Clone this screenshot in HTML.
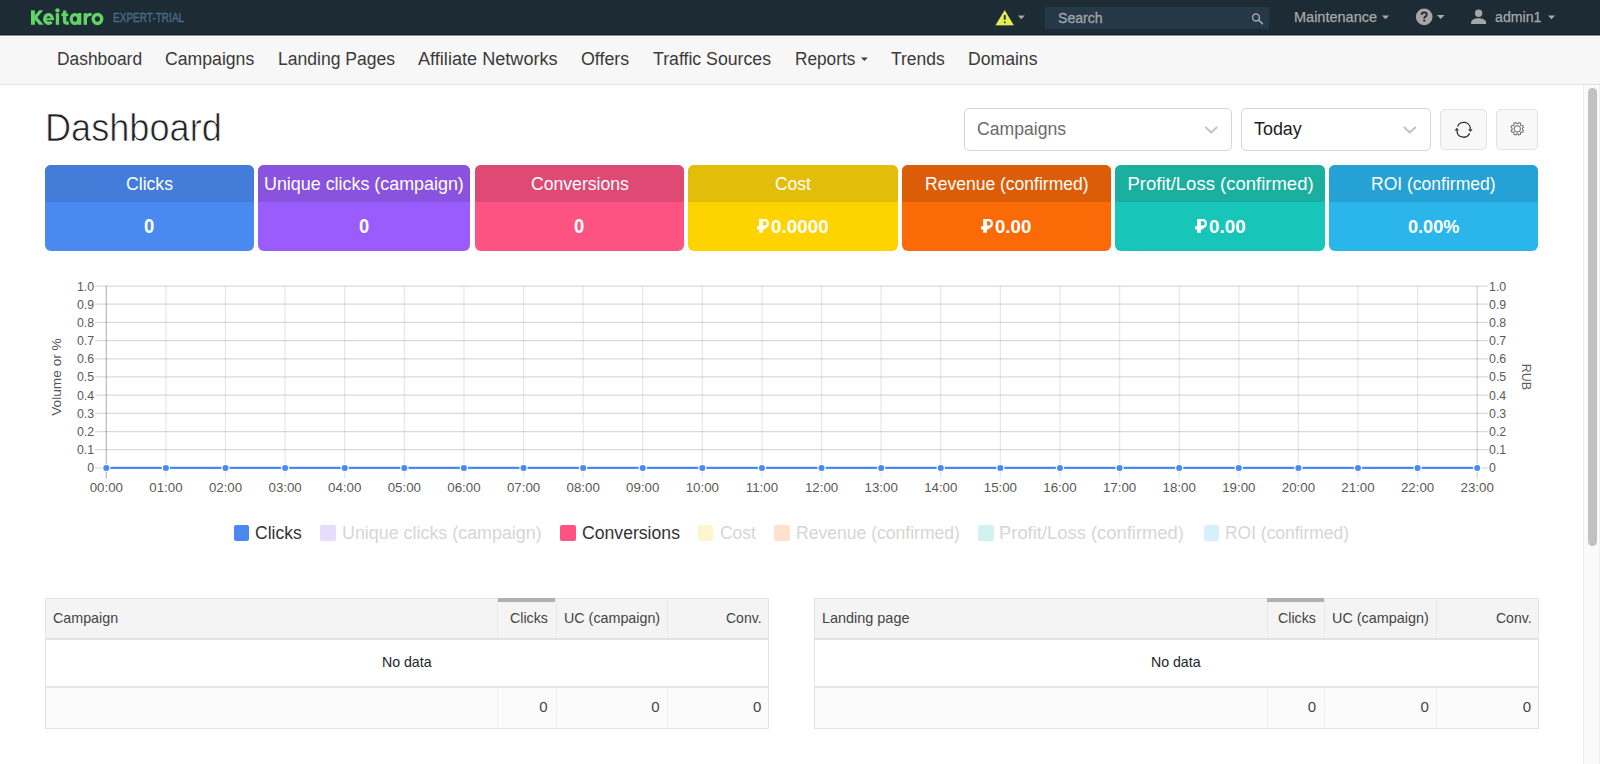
<!DOCTYPE html>
<html><head><meta charset="utf-8"><style>
html,body{margin:0;padding:0;width:1600px;height:764px;overflow:hidden;background:#fff;}
body{position:relative;font-family:"Liberation Sans",sans-serif;}
.t{position:absolute;white-space:nowrap;transform-origin:0 0;}
.r{position:absolute;}
</style></head><body>
<div class="r" style="left:0.00px;top:0.00px;width:1600.00px;height:35.00px;background:#1d2b35;"></div>
<div class="r" style="left:0.00px;top:34.00px;width:1600.00px;height:1.00px;background:#0d1b26;"></div>
<div class="r" style="left:0.00px;top:35.00px;width:1600.00px;height:1.00px;background:#8a9197;"></div>
<div class="r" style="left:0.00px;top:36.00px;width:1600.00px;height:1.00px;background:#ffffff;"></div>
<div class="r" style="left:0.00px;top:37.00px;width:1600.00px;height:1.00px;background:#f1f1f1;"></div>
<svg class="r" style="left:28px;top:6px" width="80" height="22" viewBox="28 6 80 22"><g fill="#62d466"><rect x="31.0" y="10.3" width="3.9" height="14.5"/><path d="M34.6 15.6 L39.2 10.3 L43.3 10.3 L34.6 20.6 Z"/><path d="M36.6 16.4 L43.7 24.8 L39.1 24.8 L34.4 19.3 Z"/><rect x="55.8" y="13.2" width="3.3" height="11.6"/><circle cx="57.45" cy="10.35" r="2.2"/><rect x="61.4" y="13.4" width="6.8" height="2.7"/><rect x="78.0" y="13.0" width="3.3" height="11.8"/><rect x="83.6" y="13.2" width="3.4" height="11.6"/></g><g fill="none" stroke="#62d466"><path d="M52.4 18.95 A3.85 4.3 0 1 0 51.5 21.7" stroke-width="3.3"/><path d="M45.0 19.2 H54.0" stroke-width="2.0"/><path d="M64.6 10.6 V21.0 Q64.6 23.1 67.0 23.1 H68.8" stroke-width="3.4"/><ellipse cx="74.95" cy="18.95" rx="3.75" ry="4.4" stroke-width="3.3"/><path d="M85.2 20.5 Q85.4 14.2 91.6 14.2" stroke-width="2.9"/><ellipse cx="97.45" cy="18.95" rx="4.25" ry="4.45" stroke-width="3.5"/></g></svg>
<div class="t" style="left:112.50px;top:10.80px;font-size:12.00px;line-height:14px;color:#4a6c87;transform:scaleX(0.8358);-webkit-text-stroke:0.35px #4a6c87;">EXPERT-TRIAL</div>
<svg class="r" style="left:990px;top:4px" width="40" height="28" viewBox="990 4 40 28"><path d="M1004.7 10.6 L1013.4 25.1 L995.9 25.1 Z" fill="#e4ef55" stroke="#e4ef55" stroke-width="0.6" stroke-linejoin="round"/><rect x="1003.8" y="15.1" width="1.9" height="4.6" fill="#1e2a35"/><rect x="1003.8" y="21.5" width="1.9" height="1.7" rx="0.8" fill="#1e2a35"/><path d="M1017.9 15.4 L1024.8 15.4 L1021.35 19.2 Z" fill="#a9a9a9"/></svg>
<div class="r" style="left:1045.00px;top:7.00px;width:224.00px;height:22.00px;background:#243848;"></div>
<div class="t" style="left:1058.40px;top:8.90px;font-size:15.00px;line-height:17px;color:#a3a5a7;transform:scaleX(0.9389);-webkit-text-stroke:0.3px #a3a5a7;">Search</div>
<svg class="r" style="left:1240px;top:6px" width="32" height="24" viewBox="1240 6 32 24"><circle cx="1256" cy="17.5" r="3.4" fill="none" stroke="#a2a2a2" stroke-width="1.5"/><path d="M1258.6 20.1 L1262.4 23.7" stroke="#a2a2a2" stroke-width="1.6" stroke-linecap="round"/></svg>
<div class="t" style="left:1293.50px;top:8.00px;font-size:15.00px;line-height:17px;color:#a9a9a9;transform:scaleX(0.9663);-webkit-text-stroke:0.25px #a9a9a9;">Maintenance</div>
<svg class="r" style="left:1378px;top:4px" width="180" height="26" viewBox="1378 4 180 26"><path d="M1382 15.4 L1389 15.4 L1385.5 19.2 Z" fill="#a9a9a9"/><circle cx="1424.2" cy="16.9" r="8.3" fill="#a6a6a6"/><path d="M1421.7 14.7 Q1421.7 12.4 1424.2 12.4 Q1426.7 12.4 1426.7 14.6 Q1426.7 15.9 1425.3 16.6 Q1424.2 17.2 1424.2 18.6" fill="none" stroke="#1e2a35" stroke-width="1.9"/><circle cx="1424.2" cy="20.6" r="1.15" fill="#1e2a35"/><path d="M1437 15.0 L1444.4 15.0 L1440.7 19.0 Z" fill="#a9a9a9"/><circle cx="1478.6" cy="13.2" r="3.7" fill="#a6a6a6"/><path d="M1471.1 23.9 L1471.1 22.6 C1471.1 19.8 1475 18.3 1478.6 18.3 C1482.2 18.3 1486.1 19.8 1486.1 22.6 L1486.1 23.9 Z" fill="#a6a6a6"/><path d="M1548 15.4 L1555 15.4 L1551.5 19.2 Z" fill="#a9a9a9"/></svg>
<div class="t" style="left:1495.20px;top:8.00px;font-size:15.00px;line-height:17px;color:#a9a9a9;transform:scaleX(0.9442);-webkit-text-stroke:0.25px #a9a9a9;">admin1</div>
<div class="r" style="left:0.00px;top:38.00px;width:1600.00px;height:46.00px;background:#f7f7f7;"></div>
<div class="r" style="left:0.00px;top:84.00px;width:1600.00px;height:1.00px;background:#e3e3e3;"></div>
<div class="t" style="left:56.50px;top:49.20px;font-size:18.00px;line-height:20px;color:#3a3a3a;transform:scaleX(0.9659);">Dashboard</div>
<div class="t" style="left:165.30px;top:49.20px;font-size:18.00px;line-height:20px;color:#3a3a3a;transform:scaleX(0.9802);">Campaigns</div>
<div class="t" style="left:277.60px;top:49.20px;font-size:18.00px;line-height:20px;color:#3a3a3a;transform:scaleX(0.9742);">Landing Pages</div>
<div class="t" style="left:418.00px;top:49.20px;font-size:18.00px;line-height:20px;color:#3a3a3a;transform:scaleX(1.0068);">Affiliate Networks</div>
<div class="t" style="left:581.30px;top:49.20px;font-size:18.00px;line-height:20px;color:#3a3a3a;transform:scaleX(0.9887);">Offers</div>
<div class="t" style="left:652.80px;top:49.20px;font-size:18.00px;line-height:20px;color:#3a3a3a;transform:scaleX(0.9833);">Traffic Sources</div>
<div class="t" style="left:794.60px;top:49.20px;font-size:18.00px;line-height:20px;color:#3a3a3a;transform:scaleX(0.9571);">Reports</div>
<div class="t" style="left:890.80px;top:49.20px;font-size:18.00px;line-height:20px;color:#3a3a3a;transform:scaleX(0.9701);">Trends</div>
<div class="t" style="left:968.00px;top:49.20px;font-size:18.00px;line-height:20px;color:#3a3a3a;transform:scaleX(0.9775);">Domains</div>
<svg class="r" style="left:858px;top:55px" width="12" height="8" viewBox="858 55 12 8"><path d="M861 57.4 L867.8 57.4 L864.4 61 Z" fill="#3a3a3a"/></svg>
<div class="r" style="left:1583.00px;top:85.00px;width:17.00px;height:679.00px;background:#fafafa;border-left:1px solid #ececec;border-right:1px solid #f1f1f1;box-sizing:border-box;"></div>
<div class="r" style="left:1588.00px;top:88.00px;width:9.00px;height:458.00px;background:#c1c1c1;border-radius:4.5px;"></div>
<div class="t" style="left:44.50px;top:106.25px;font-size:38.50px;line-height:43px;color:#1f2326;transform:scaleX(0.9386);-webkit-text-stroke:0.7px #fff;">Dashboard</div>
<div class="r" style="left:964.00px;top:108.00px;width:268.00px;height:43.00px;border:1px solid #cfd6dd;border-radius:5px;background:#fff;box-sizing:border-box;"></div>
<div class="t" style="left:977.00px;top:118.80px;font-size:17.50px;line-height:20px;color:#6b6b6b;transform:scaleX(1.0056);">Campaigns</div>
<div class="r" style="left:1241.00px;top:108.00px;width:190.00px;height:43.00px;border:1px solid #cfd6dd;border-radius:5px;background:#fff;box-sizing:border-box;"></div>
<div class="t" style="left:1253.80px;top:119.30px;font-size:18.00px;line-height:20px;color:#212121;transform:scaleX(0.9938);">Today</div>
<svg class="r" style="left:1195px;top:118px" width="230" height="24" viewBox="1195 118 230 24"><path d="M1205.9 127.4 L1211.2 132.4 L1216.6 127.4" fill="none" stroke="#c2c2c2" stroke-width="2" stroke-linecap="round" stroke-linejoin="round"/><path d="M1404.5 127.4 L1409.8 132.4 L1415.2 127.4" fill="none" stroke="#c2c2c2" stroke-width="2" stroke-linecap="round" stroke-linejoin="round"/></svg>
<div class="r" style="left:1440.00px;top:109.00px;width:47.00px;height:41.00px;border:1px solid #e2e2e2;border-radius:5px;background:#f8f8f8;box-sizing:border-box;"></div>
<div class="r" style="left:1496.00px;top:109.00px;width:42.00px;height:41.00px;border:1px solid #e2e2e2;border-radius:5px;background:#f8f8f8;box-sizing:border-box;"></div>
<svg class="r" style="left:1450px;top:117px" width="28" height="26" viewBox="1450 117 28 26"><path d="M1457.6 126.4 A6.6 6.6 0 0 1 1470.3 129.2" fill="none" stroke="#2f2f2f" stroke-width="1.3"/><path d="M1469.6 133.3 A6.6 6.6 0 0 1 1457 130.4" fill="none" stroke="#2f2f2f" stroke-width="1.3"/><path d="M1468.2 129.2 L1472.6 129.2 L1470.4 131.9 Z" fill="#2f2f2f"/><path d="M1454.6 130.5 L1459 130.5 L1456.8 127.8 Z" fill="#2f2f2f"/></svg>
<svg class="r" style="left:1504px;top:117px" width="28" height="26" viewBox="1504 117 28 26"><path d="M1517.79 123.72 L1518.79 122.58 L1520.64 123.34 L1520.54 124.86 L1521.24 125.56 L1522.76 125.46 L1523.52 127.31 L1522.38 128.31 L1522.38 129.29 L1523.52 130.29 L1522.76 132.14 L1521.24 132.04 L1520.54 132.74 L1520.64 134.26 L1518.79 135.02 L1517.79 133.88 L1516.81 133.88 L1515.81 135.02 L1513.96 134.26 L1514.06 132.74 L1513.36 132.04 L1511.84 132.14 L1511.08 130.29 L1512.22 129.29 L1512.22 128.31 L1511.08 127.31 L1511.84 125.46 L1513.36 125.56 L1514.06 124.86 L1513.96 123.34 L1515.81 122.58 L1516.81 123.72 Z" fill="none" stroke="#777" stroke-width="1.1" stroke-linejoin="round"/><circle cx="1517.3" cy="128.8" r="3.1" fill="none" stroke="#777" stroke-width="1.1"/></svg>
<div class="r" style="left:45.00px;top:165px;width:209.00px;height:86px;border-radius:6px;overflow:hidden;background:#4a8af0"><div style="height:36.5px;background:#447cda"></div></div>
<div class="t" style="left:125.60px;top:172.60px;font-size:18.50px;line-height:21px;color:#fff;transform:scaleX(0.9523);">Clicks</div>
<div class="t" style="left:143.80px;top:215.10px;font-size:19.80px;line-height:22px;color:#fff;font-weight:bold;transform:scaleX(0.9273);">0</div>
<div class="r" style="left:258.00px;top:165px;width:212.00px;height:86px;border-radius:6px;overflow:hidden;background:#9b5cfd"><div style="height:36.5px;background:#8953e0"></div></div>
<div class="t" style="left:264.20px;top:172.60px;font-size:18.50px;line-height:21px;color:#fff;transform:scaleX(0.9669);">Unique clicks (campaign)</div>
<div class="t" style="left:359.05px;top:215.10px;font-size:19.80px;line-height:22px;color:#fff;font-weight:bold;transform:scaleX(0.9273);">0</div>
<div class="r" style="left:475.00px;top:165px;width:209.00px;height:86px;border-radius:6px;overflow:hidden;background:#fd5382"><div style="height:36.5px;background:#de4a73"></div></div>
<div class="t" style="left:530.60px;top:172.60px;font-size:18.50px;line-height:21px;color:#fff;transform:scaleX(0.9518);">Conversions</div>
<div class="t" style="left:574.10px;top:215.10px;font-size:19.80px;line-height:22px;color:#fff;font-weight:bold;transform:scaleX(0.9273);">0</div>
<div class="r" style="left:688.00px;top:165px;width:210.00px;height:86px;border-radius:6px;overflow:hidden;background:#fdd300"><div style="height:36.5px;background:#e2bd0a"></div></div>
<div class="t" style="left:775.00px;top:172.60px;font-size:18.50px;line-height:21px;color:#fff;transform:scaleX(0.9438);">Cost</div>
<div class="t" style="left:771.00px;top:216.10px;font-size:19.00px;line-height:21px;color:#fff;font-weight:bold;transform:scaleX(0.9914);">0.0000</div>
<svg class="r" style="left:757.00px;top:216px" width="16" height="20" viewBox="0 0 16 20"><path fill="#fff" fill-rule="evenodd" d="M2.15 3 H7.8 C10.5 3 12.05 4.8 12.05 7.5 C12.05 10.2 10.5 12 7.8 12 H5.95 V16.8 H2.15 Z M5.95 5.25 H7.7 C9.1 5.25 9.7 6.2 9.7 7.45 C9.7 8.7 9.1 9.6 7.7 9.6 H5.95 Z"/><rect x="0" y="10.3" width="8.3" height="3.1" fill="#fff"/></svg>
<div class="r" style="left:902.00px;top:165px;width:209.00px;height:86px;border-radius:6px;overflow:hidden;background:#fa6a06"><div style="height:36.5px;background:#dc5d07"></div></div>
<div class="t" style="left:924.90px;top:172.60px;font-size:18.50px;line-height:21px;color:#fff;transform:scaleX(0.9470);">Revenue (confirmed)</div>
<div class="t" style="left:995.20px;top:216.10px;font-size:19.00px;line-height:21px;color:#fff;font-weight:bold;transform:scaleX(0.9811);">0.00</div>
<svg class="r" style="left:981.20px;top:216px" width="16" height="20" viewBox="0 0 16 20"><path fill="#fff" fill-rule="evenodd" d="M2.15 3 H7.8 C10.5 3 12.05 4.8 12.05 7.5 C12.05 10.2 10.5 12 7.8 12 H5.95 V16.8 H2.15 Z M5.95 5.25 H7.7 C9.1 5.25 9.7 6.2 9.7 7.45 C9.7 8.7 9.1 9.6 7.7 9.6 H5.95 Z"/><rect x="0" y="10.3" width="8.3" height="3.1" fill="#fff"/></svg>
<div class="r" style="left:1115.00px;top:165px;width:210.00px;height:86px;border-radius:6px;overflow:hidden;background:#17c5b9"><div style="height:36.5px;background:#1baf9f"></div></div>
<div class="t" style="left:1127.50px;top:172.60px;font-size:18.50px;line-height:21px;color:#fff;">Profit/Loss (confirmed)</div>
<div class="t" style="left:1209.00px;top:216.10px;font-size:19.00px;line-height:21px;color:#fff;font-weight:bold;transform:scaleX(0.9892);">0.00</div>
<svg class="r" style="left:1195.00px;top:216px" width="16" height="20" viewBox="0 0 16 20"><path fill="#fff" fill-rule="evenodd" d="M2.15 3 H7.8 C10.5 3 12.05 4.8 12.05 7.5 C12.05 10.2 10.5 12 7.8 12 H5.95 V16.8 H2.15 Z M5.95 5.25 H7.7 C9.1 5.25 9.7 6.2 9.7 7.45 C9.7 8.7 9.1 9.6 7.7 9.6 H5.95 Z"/><rect x="0" y="10.3" width="8.3" height="3.1" fill="#fff"/></svg>
<div class="r" style="left:1329.00px;top:165px;width:209.00px;height:86px;border-radius:6px;overflow:hidden;background:#2ab6eb"><div style="height:36.5px;background:#26a1d6"></div></div>
<div class="t" style="left:1371.20px;top:172.60px;font-size:18.50px;line-height:21px;color:#fff;transform:scaleX(0.9468);">ROI (confirmed)</div>
<div class="t" style="left:1408.00px;top:216.10px;font-size:19.00px;line-height:21px;color:#fff;font-weight:bold;transform:scaleX(0.9544);">0.00%</div>
<svg class="r" style="left:0;top:0" width="1600" height="764"><path d="M95 286.00 H1488" stroke="rgba(0,0,0,0.15)" stroke-width="1.25"/><path d="M95 304.19 H1488" stroke="rgba(0,0,0,0.15)" stroke-width="1.25"/><path d="M95 322.38 H1488" stroke="rgba(0,0,0,0.15)" stroke-width="1.25"/><path d="M95 340.57 H1488" stroke="rgba(0,0,0,0.15)" stroke-width="1.25"/><path d="M95 358.76 H1488" stroke="rgba(0,0,0,0.15)" stroke-width="1.25"/><path d="M95 376.95 H1488" stroke="rgba(0,0,0,0.15)" stroke-width="1.25"/><path d="M95 395.14 H1488" stroke="rgba(0,0,0,0.15)" stroke-width="1.25"/><path d="M95 413.33 H1488" stroke="rgba(0,0,0,0.15)" stroke-width="1.25"/><path d="M95 431.52 H1488" stroke="rgba(0,0,0,0.15)" stroke-width="1.25"/><path d="M95 449.71 H1488" stroke="rgba(0,0,0,0.15)" stroke-width="1.25"/><path d="M95 467.90 H1488" stroke="rgba(0,0,0,0.15)" stroke-width="1.25"/><path d="M106.30 286 V478.5" stroke="rgba(0,0,0,0.09)" stroke-width="1.3"/><path d="M165.90 286 V478.5" stroke="rgba(0,0,0,0.09)" stroke-width="1.3"/><path d="M225.51 286 V478.5" stroke="rgba(0,0,0,0.09)" stroke-width="1.3"/><path d="M285.11 286 V478.5" stroke="rgba(0,0,0,0.09)" stroke-width="1.3"/><path d="M344.72 286 V478.5" stroke="rgba(0,0,0,0.09)" stroke-width="1.3"/><path d="M404.32 286 V478.5" stroke="rgba(0,0,0,0.09)" stroke-width="1.3"/><path d="M463.93 286 V478.5" stroke="rgba(0,0,0,0.09)" stroke-width="1.3"/><path d="M523.53 286 V478.5" stroke="rgba(0,0,0,0.09)" stroke-width="1.3"/><path d="M583.13 286 V478.5" stroke="rgba(0,0,0,0.09)" stroke-width="1.3"/><path d="M642.74 286 V478.5" stroke="rgba(0,0,0,0.09)" stroke-width="1.3"/><path d="M702.34 286 V478.5" stroke="rgba(0,0,0,0.09)" stroke-width="1.3"/><path d="M761.95 286 V478.5" stroke="rgba(0,0,0,0.09)" stroke-width="1.3"/><path d="M821.55 286 V478.5" stroke="rgba(0,0,0,0.09)" stroke-width="1.3"/><path d="M881.16 286 V478.5" stroke="rgba(0,0,0,0.09)" stroke-width="1.3"/><path d="M940.76 286 V478.5" stroke="rgba(0,0,0,0.09)" stroke-width="1.3"/><path d="M1000.37 286 V478.5" stroke="rgba(0,0,0,0.09)" stroke-width="1.3"/><path d="M1059.97 286 V478.5" stroke="rgba(0,0,0,0.09)" stroke-width="1.3"/><path d="M1119.57 286 V478.5" stroke="rgba(0,0,0,0.09)" stroke-width="1.3"/><path d="M1179.18 286 V478.5" stroke="rgba(0,0,0,0.09)" stroke-width="1.3"/><path d="M1238.78 286 V478.5" stroke="rgba(0,0,0,0.09)" stroke-width="1.3"/><path d="M1298.39 286 V478.5" stroke="rgba(0,0,0,0.09)" stroke-width="1.3"/><path d="M1357.99 286 V478.5" stroke="rgba(0,0,0,0.09)" stroke-width="1.3"/><path d="M1417.60 286 V478.5" stroke="rgba(0,0,0,0.09)" stroke-width="1.3"/><path d="M1477.20 286 V478.5" stroke="rgba(0,0,0,0.09)" stroke-width="1.3"/><path d="M106.30 286 V478.5" stroke="rgba(0,0,0,0.2)" stroke-width="1.2"/><path d="M1477.20 286 V478.5" stroke="rgba(0,0,0,0.1)" stroke-width="1"/><path d="M106.30 467.90 H1477.20" stroke="#4a8af0" stroke-width="2.2"/><circle cx="106.30" cy="467.90" r="3.6" fill="#4a8af0" stroke="#fff" stroke-width="1.2"/><circle cx="165.90" cy="467.90" r="3.6" fill="#4a8af0" stroke="#fff" stroke-width="1.2"/><circle cx="225.51" cy="467.90" r="3.6" fill="#4a8af0" stroke="#fff" stroke-width="1.2"/><circle cx="285.11" cy="467.90" r="3.6" fill="#4a8af0" stroke="#fff" stroke-width="1.2"/><circle cx="344.72" cy="467.90" r="3.6" fill="#4a8af0" stroke="#fff" stroke-width="1.2"/><circle cx="404.32" cy="467.90" r="3.6" fill="#4a8af0" stroke="#fff" stroke-width="1.2"/><circle cx="463.93" cy="467.90" r="3.6" fill="#4a8af0" stroke="#fff" stroke-width="1.2"/><circle cx="523.53" cy="467.90" r="3.6" fill="#4a8af0" stroke="#fff" stroke-width="1.2"/><circle cx="583.13" cy="467.90" r="3.6" fill="#4a8af0" stroke="#fff" stroke-width="1.2"/><circle cx="642.74" cy="467.90" r="3.6" fill="#4a8af0" stroke="#fff" stroke-width="1.2"/><circle cx="702.34" cy="467.90" r="3.6" fill="#4a8af0" stroke="#fff" stroke-width="1.2"/><circle cx="761.95" cy="467.90" r="3.6" fill="#4a8af0" stroke="#fff" stroke-width="1.2"/><circle cx="821.55" cy="467.90" r="3.6" fill="#4a8af0" stroke="#fff" stroke-width="1.2"/><circle cx="881.16" cy="467.90" r="3.6" fill="#4a8af0" stroke="#fff" stroke-width="1.2"/><circle cx="940.76" cy="467.90" r="3.6" fill="#4a8af0" stroke="#fff" stroke-width="1.2"/><circle cx="1000.37" cy="467.90" r="3.6" fill="#4a8af0" stroke="#fff" stroke-width="1.2"/><circle cx="1059.97" cy="467.90" r="3.6" fill="#4a8af0" stroke="#fff" stroke-width="1.2"/><circle cx="1119.57" cy="467.90" r="3.6" fill="#4a8af0" stroke="#fff" stroke-width="1.2"/><circle cx="1179.18" cy="467.90" r="3.6" fill="#4a8af0" stroke="#fff" stroke-width="1.2"/><circle cx="1238.78" cy="467.90" r="3.6" fill="#4a8af0" stroke="#fff" stroke-width="1.2"/><circle cx="1298.39" cy="467.90" r="3.6" fill="#4a8af0" stroke="#fff" stroke-width="1.2"/><circle cx="1357.99" cy="467.90" r="3.6" fill="#4a8af0" stroke="#fff" stroke-width="1.2"/><circle cx="1417.60" cy="467.90" r="3.6" fill="#4a8af0" stroke="#fff" stroke-width="1.2"/><circle cx="1477.20" cy="467.90" r="3.6" fill="#4a8af0" stroke="#fff" stroke-width="1.2"/></svg>
<div class="t" style="left:77.00px;top:279.50px;font-size:12.30px;line-height:14px;color:#595959;">1.0</div>
<div class="t" style="left:1489.10px;top:279.50px;font-size:12.30px;line-height:14px;color:#595959;">1.0</div>
<div class="t" style="left:77.00px;top:297.69px;font-size:12.30px;line-height:14px;color:#595959;">0.9</div>
<div class="t" style="left:1489.10px;top:297.69px;font-size:12.30px;line-height:14px;color:#595959;">0.9</div>
<div class="t" style="left:77.00px;top:315.88px;font-size:12.30px;line-height:14px;color:#595959;">0.8</div>
<div class="t" style="left:1489.10px;top:315.88px;font-size:12.30px;line-height:14px;color:#595959;">0.8</div>
<div class="t" style="left:77.00px;top:334.07px;font-size:12.30px;line-height:14px;color:#595959;">0.7</div>
<div class="t" style="left:1489.10px;top:334.07px;font-size:12.30px;line-height:14px;color:#595959;">0.7</div>
<div class="t" style="left:77.00px;top:352.26px;font-size:12.30px;line-height:14px;color:#595959;">0.6</div>
<div class="t" style="left:1489.10px;top:352.26px;font-size:12.30px;line-height:14px;color:#595959;">0.6</div>
<div class="t" style="left:77.00px;top:370.45px;font-size:12.30px;line-height:14px;color:#595959;">0.5</div>
<div class="t" style="left:1489.10px;top:370.45px;font-size:12.30px;line-height:14px;color:#595959;">0.5</div>
<div class="t" style="left:77.00px;top:388.64px;font-size:12.30px;line-height:14px;color:#595959;">0.4</div>
<div class="t" style="left:1489.10px;top:388.64px;font-size:12.30px;line-height:14px;color:#595959;">0.4</div>
<div class="t" style="left:77.00px;top:406.83px;font-size:12.30px;line-height:14px;color:#595959;">0.3</div>
<div class="t" style="left:1489.10px;top:406.83px;font-size:12.30px;line-height:14px;color:#595959;">0.3</div>
<div class="t" style="left:77.00px;top:425.02px;font-size:12.30px;line-height:14px;color:#595959;">0.2</div>
<div class="t" style="left:1489.10px;top:425.02px;font-size:12.30px;line-height:14px;color:#595959;">0.2</div>
<div class="t" style="left:77.00px;top:443.21px;font-size:12.30px;line-height:14px;color:#595959;">0.1</div>
<div class="t" style="left:1489.10px;top:443.21px;font-size:12.30px;line-height:14px;color:#595959;">0.1</div>
<div class="t" style="left:87.25px;top:461.40px;font-size:12.30px;line-height:14px;color:#595959;">0</div>
<div class="t" style="left:1489.10px;top:461.40px;font-size:12.30px;line-height:14px;color:#595959;">0</div>
<div class="t" style="left:89.67px;top:479.80px;font-size:13.30px;line-height:15px;color:#595959;">00:00</div>
<div class="t" style="left:149.28px;top:479.80px;font-size:13.30px;line-height:15px;color:#595959;">01:00</div>
<div class="t" style="left:208.88px;top:479.80px;font-size:13.30px;line-height:15px;color:#595959;">02:00</div>
<div class="t" style="left:268.49px;top:479.80px;font-size:13.30px;line-height:15px;color:#595959;">03:00</div>
<div class="t" style="left:328.09px;top:479.80px;font-size:13.30px;line-height:15px;color:#595959;">04:00</div>
<div class="t" style="left:387.70px;top:479.80px;font-size:13.30px;line-height:15px;color:#595959;">05:00</div>
<div class="t" style="left:447.30px;top:479.80px;font-size:13.30px;line-height:15px;color:#595959;">06:00</div>
<div class="t" style="left:506.91px;top:479.80px;font-size:13.30px;line-height:15px;color:#595959;">07:00</div>
<div class="t" style="left:566.51px;top:479.80px;font-size:13.30px;line-height:15px;color:#595959;">08:00</div>
<div class="t" style="left:626.11px;top:479.80px;font-size:13.30px;line-height:15px;color:#595959;">09:00</div>
<div class="t" style="left:685.72px;top:479.80px;font-size:13.30px;line-height:15px;color:#595959;">10:00</div>
<div class="t" style="left:745.82px;top:479.80px;font-size:13.30px;line-height:15px;color:#595959;">11:00</div>
<div class="t" style="left:804.93px;top:479.80px;font-size:13.30px;line-height:15px;color:#595959;">12:00</div>
<div class="t" style="left:864.53px;top:479.80px;font-size:13.30px;line-height:15px;color:#595959;">13:00</div>
<div class="t" style="left:924.14px;top:479.80px;font-size:13.30px;line-height:15px;color:#595959;">14:00</div>
<div class="t" style="left:983.74px;top:479.80px;font-size:13.30px;line-height:15px;color:#595959;">15:00</div>
<div class="t" style="left:1043.34px;top:479.80px;font-size:13.30px;line-height:15px;color:#595959;">16:00</div>
<div class="t" style="left:1102.95px;top:479.80px;font-size:13.30px;line-height:15px;color:#595959;">17:00</div>
<div class="t" style="left:1162.55px;top:479.80px;font-size:13.30px;line-height:15px;color:#595959;">18:00</div>
<div class="t" style="left:1222.16px;top:479.80px;font-size:13.30px;line-height:15px;color:#595959;">19:00</div>
<div class="t" style="left:1281.76px;top:479.80px;font-size:13.30px;line-height:15px;color:#595959;">20:00</div>
<div class="t" style="left:1341.37px;top:479.80px;font-size:13.30px;line-height:15px;color:#595959;">21:00</div>
<div class="t" style="left:1400.97px;top:479.80px;font-size:13.30px;line-height:15px;color:#595959;">22:00</div>
<div class="t" style="left:1460.58px;top:479.80px;font-size:13.30px;line-height:15px;color:#595959;">23:00</div>
<div class="r" style="left:0px;top:370px;width:114px;text-align:center;white-space:nowrap;font-size:13.7px;line-height:14px;color:#555;transform-origin:57px 7px;transform:rotate(-90deg);">Volume or %</div>
<div class="r" style="left:1469px;top:370px;width:114px;text-align:center;white-space:nowrap;font-size:12.5px;line-height:14px;color:#5e5e5e;transform-origin:57px 7px;transform:rotate(90deg);">RUB</div>
<div class="r" style="left:233.50px;top:525.00px;width:15.50px;height:15.50px;background:#4a8af0;border-radius:2px;"></div>
<div class="t" style="left:255.25px;top:522.75px;font-size:18.00px;line-height:20px;color:#333;transform:scaleX(0.9719);">Clicks</div>
<div class="r" style="left:320.25px;top:525.00px;width:15.50px;height:15.50px;background:#e6dcfd;border-radius:2px;"></div>
<div class="t" style="left:341.90px;top:522.75px;font-size:18.00px;line-height:20px;color:#d6d6d6;transform:scaleX(0.9930);">Unique clicks (campaign)</div>
<div class="r" style="left:560.00px;top:525.00px;width:15.50px;height:15.50px;background:#fd5382;border-radius:2px;"></div>
<div class="t" style="left:581.70px;top:522.75px;font-size:18.00px;line-height:20px;color:#333;transform:scaleX(0.9790);">Conversions</div>
<div class="r" style="left:697.70px;top:525.00px;width:15.50px;height:15.50px;background:#fff5cc;border-radius:2px;"></div>
<div class="t" style="left:719.50px;top:522.75px;font-size:18.00px;line-height:20px;color:#d6d6d6;transform:scaleX(0.9676);">Cost</div>
<div class="r" style="left:774.30px;top:525.00px;width:15.50px;height:15.50px;background:#fee1ce;border-radius:2px;"></div>
<div class="t" style="left:795.60px;top:522.75px;font-size:18.00px;line-height:20px;color:#d6d6d6;transform:scaleX(0.9756);">Revenue (confirmed)</div>
<div class="r" style="left:978.10px;top:525.00px;width:15.50px;height:15.50px;background:#d1f3f0;border-radius:2px;"></div>
<div class="t" style="left:999.40px;top:522.75px;font-size:18.00px;line-height:20px;color:#d6d6d6;transform:scaleX(1.0215);">Profit/Loss (confirmed)</div>
<div class="r" style="left:1203.60px;top:525.00px;width:15.50px;height:15.50px;background:#d4f0fb;border-radius:2px;"></div>
<div class="t" style="left:1224.90px;top:522.75px;font-size:18.00px;line-height:20px;color:#d6d6d6;transform:scaleX(0.9688);">ROI (confirmed)</div>
<div class="r" style="left:45.20px;top:598.00px;width:723.60px;height:131.00px;border:1px solid #e3e3e3;box-sizing:border-box;background:#fff;"></div>
<div class="r" style="left:46.20px;top:599.30px;width:721.60px;height:39.00px;background:#f4f4f4;"></div>
<div class="r" style="left:46.20px;top:638.00px;width:721.60px;height:1.50px;background:#e2e2e2;"></div>
<div class="r" style="left:46.20px;top:686.30px;width:721.60px;height:1.50px;background:#e6e6e6;"></div>
<div class="r" style="left:46.20px;top:687.80px;width:721.60px;height:40.20px;background:#fbfbfb;"></div>
<div class="r" style="left:497.30px;top:599.30px;width:1.00px;height:38.70px;background:#ebebeb;"></div>
<div class="r" style="left:497.30px;top:687.80px;width:1.00px;height:40.20px;background:#f0f0f0;"></div>
<div class="r" style="left:555.50px;top:599.30px;width:1.00px;height:38.70px;background:#ebebeb;"></div>
<div class="r" style="left:555.50px;top:687.80px;width:1.00px;height:40.20px;background:#f0f0f0;"></div>
<div class="r" style="left:666.80px;top:599.30px;width:1.00px;height:38.70px;background:#ebebeb;"></div>
<div class="r" style="left:666.80px;top:687.80px;width:1.00px;height:40.20px;background:#f0f0f0;"></div>
<div class="r" style="left:497.80px;top:598.40px;width:57.70px;height:3.40px;background:#b0b0b4;"></div>
<div class="t" style="left:52.70px;top:608.80px;font-size:15.00px;line-height:17px;color:#444;transform:scaleX(0.9518);">Campaign</div>
<div class="t" style="left:509.60px;top:608.60px;font-size:15.00px;line-height:17px;color:#444;transform:scaleX(0.9475);">Clicks</div>
<div class="t" style="left:563.50px;top:608.60px;font-size:15.00px;line-height:17px;color:#444;transform:scaleX(0.9529);">UC (campaign)</div>
<div class="t" style="left:725.80px;top:608.60px;font-size:15.00px;line-height:17px;color:#444;transform:scaleX(0.9342);">Conv.</div>
<div class="t" style="left:382.15px;top:652.80px;font-size:15.00px;line-height:17px;color:#212529;transform:scaleX(0.9422);">No data</div>
<div class="t" style="left:539.25px;top:697.50px;font-size:15.00px;line-height:17px;color:#444;">0</div>
<div class="t" style="left:651.25px;top:697.50px;font-size:15.00px;line-height:17px;color:#444;">0</div>
<div class="t" style="left:753.05px;top:697.50px;font-size:15.00px;line-height:17px;color:#444;">0</div>
<div class="r" style="left:814.00px;top:598.00px;width:724.50px;height:131.00px;border:1px solid #e3e3e3;box-sizing:border-box;background:#fff;"></div>
<div class="r" style="left:815.00px;top:599.30px;width:722.50px;height:39.00px;background:#f4f4f4;"></div>
<div class="r" style="left:815.00px;top:638.00px;width:722.50px;height:1.50px;background:#e2e2e2;"></div>
<div class="r" style="left:815.00px;top:686.30px;width:722.50px;height:1.50px;background:#e6e6e6;"></div>
<div class="r" style="left:815.00px;top:687.80px;width:722.50px;height:40.20px;background:#fbfbfb;"></div>
<div class="r" style="left:1266.50px;top:599.30px;width:1.00px;height:38.70px;background:#ebebeb;"></div>
<div class="r" style="left:1266.50px;top:687.80px;width:1.00px;height:40.20px;background:#f0f0f0;"></div>
<div class="r" style="left:1324.00px;top:599.30px;width:1.00px;height:38.70px;background:#ebebeb;"></div>
<div class="r" style="left:1324.00px;top:687.80px;width:1.00px;height:40.20px;background:#f0f0f0;"></div>
<div class="r" style="left:1436.00px;top:599.30px;width:1.00px;height:38.70px;background:#ebebeb;"></div>
<div class="r" style="left:1436.00px;top:687.80px;width:1.00px;height:40.20px;background:#f0f0f0;"></div>
<div class="r" style="left:1267.00px;top:598.40px;width:57.00px;height:3.40px;background:#b0b0b4;"></div>
<div class="t" style="left:821.50px;top:608.80px;font-size:15.00px;line-height:17px;color:#444;transform:scaleX(0.9615);">Landing page</div>
<div class="t" style="left:1278.10px;top:608.60px;font-size:15.00px;line-height:17px;color:#444;transform:scaleX(0.9475);">Clicks</div>
<div class="t" style="left:1332.00px;top:608.60px;font-size:15.00px;line-height:17px;color:#444;transform:scaleX(0.9598);">UC (campaign)</div>
<div class="t" style="left:1495.50px;top:608.60px;font-size:15.00px;line-height:17px;color:#444;transform:scaleX(0.9342);">Conv.</div>
<div class="t" style="left:1151.40px;top:652.80px;font-size:15.00px;line-height:17px;color:#212529;transform:scaleX(0.9422);">No data</div>
<div class="t" style="left:1307.75px;top:697.50px;font-size:15.00px;line-height:17px;color:#444;">0</div>
<div class="t" style="left:1420.45px;top:697.50px;font-size:15.00px;line-height:17px;color:#444;">0</div>
<div class="t" style="left:1522.75px;top:697.50px;font-size:15.00px;line-height:17px;color:#444;">0</div>
</body></html>
